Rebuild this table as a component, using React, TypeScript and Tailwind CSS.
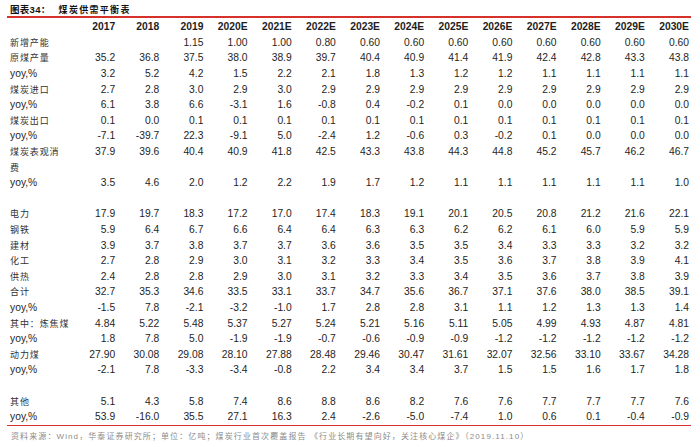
const years = ["2017", "2018", "2019", "2020E", "2021E", "2022E", "2023E", "2024E", "2025E", "2026E", "2027E", "2028E", "2029E", "2030E"];

type Row = { label: string; vals?: string[]; cn?: boolean; tall?: boolean };

const s = (t: string) => t.split(" ");

const rows: Row[] = [
  { label: "新增产能", cn: true, vals: ["", "", ...s("1.15 1.00 1.00 0.80 0.60 0.60 0.60 0.60 0.60 0.60 0.60 0.60")] },
  { label: "原煤产量", cn: true, vals: s("35.2 36.8 37.5 38.0 38.9 39.7 40.4 40.9 41.4 41.9 42.4 42.8 43.3 43.8") },
  { label: "yoy,%", vals: s("3.2 5.2 4.2 1.5 2.2 2.1 1.8 1.3 1.2 1.2 1.1 1.1 1.1 1.1") },
  { label: "煤炭进口", cn: true, vals: s("2.7 2.8 3.0 2.9 3.0 2.9 2.9 2.9 2.9 2.9 2.9 2.9 2.9 2.9") },
  { label: "yoy,%", vals: s("6.1 3.8 6.6 -3.1 1.6 -0.8 0.4 -0.2 0.1 0.0 0.0 0.0 0.0 0.0") },
  { label: "煤炭出口", cn: true, vals: s("0.1 0.0 0.1 0.1 0.1 0.1 0.1 0.1 0.1 0.1 0.1 0.1 0.1 0.1") },
  { label: "yoy,%", vals: s("-7.1 -39.7 22.3 -9.1 5.0 -2.4 1.2 -0.6 0.3 -0.2 0.1 0.0 0.0 0.0") },
  { label: "煤炭表观消\n费", cn: true, tall: true, vals: s("37.9 39.6 40.4 40.9 41.8 42.5 43.3 43.8 44.3 44.8 45.2 45.7 46.2 46.7") },
  { label: "yoy,%", vals: s("3.5 4.6 2.0 1.2 2.2 1.9 1.7 1.2 1.1 1.1 1.1 1.1 1.1 1.0") },
  { label: "" },
  { label: "电力", cn: true, vals: s("17.9 19.7 18.3 17.2 17.0 17.4 18.3 19.1 20.1 20.5 20.8 21.2 21.6 22.1") },
  { label: "钢铁", cn: true, vals: s("5.9 6.4 6.7 6.6 6.4 6.4 6.3 6.3 6.2 6.2 6.1 6.0 5.9 5.9") },
  { label: "建材", cn: true, vals: s("3.9 3.7 3.8 3.7 3.7 3.6 3.6 3.5 3.5 3.4 3.3 3.3 3.2 3.2") },
  { label: "化工", cn: true, vals: s("2.7 2.8 2.9 3.0 3.1 3.2 3.3 3.4 3.5 3.6 3.7 3.8 3.9 4.1") },
  { label: "供热", cn: true, vals: s("2.4 2.8 2.8 2.9 3.0 3.1 3.2 3.3 3.4 3.5 3.6 3.7 3.8 3.9") },
  { label: "合计", cn: true, vals: s("32.7 35.3 34.6 33.5 33.1 33.7 34.7 35.6 36.7 37.1 37.6 38.0 38.5 39.1") },
  { label: "yoy,%", vals: s("-1.5 7.8 -2.1 -3.2 -1.0 1.7 2.8 2.8 3.1 1.1 1.2 1.3 1.3 1.4") },
  { label: "其中：炼焦煤", cn: true, vals: s("4.84 5.22 5.48 5.37 5.27 5.24 5.21 5.16 5.11 5.05 4.99 4.93 4.87 4.81") },
  { label: "yoy,%", vals: s("1.8 7.8 5.0 -1.9 -1.9 -0.7 -0.6 -0.9 -0.9 -1.2 -1.2 -1.2 -1.2 -1.2") },
  { label: "动力煤", cn: true, vals: s("27.90 30.08 29.08 28.10 27.88 28.48 29.46 30.47 31.61 32.07 32.56 33.10 33.67 34.28") },
  { label: "yoy,%", vals: s("-2.1 7.8 -3.3 -3.4 -0.8 2.2 3.4 3.4 3.7 1.5 1.5 1.6 1.7 1.8") },
  { label: "" },
  { label: "其他", cn: true, vals: s("5.1 4.3 5.8 7.4 8.6 8.8 8.6 8.2 7.6 7.6 7.7 7.7 7.7 7.6") },
  { label: "yoy,%", vals: s("53.9 -16.0 35.5 27.1 16.3 2.4 -2.6 -5.0 -7.4 1.0 0.6 0.1 -0.4 -0.9") },
];

const grid = "grid grid-cols-[64px_repeat(14,44.15px)]";

export default function App() {
  return (
    <div className="w-[700px] h-[447px] bg-white pl-[7px] text-[#1e1e1e] font-['Liberation_Sans','Noto_Sans_CJK_SC',sans-serif] overflow-hidden">
      {/* 标题 */}
      <div className="h-[16px] pt-[3px] pl-[3px] flex items-center text-[9.5px] font-bold leading-none text-[#111]">
        <span className="tracking-[0.3px]">图表34：</span>
        <span className="ml-[8px] text-[9px] tracking-[1.3px] font-['Noto_Sans_CJK_SC',sans-serif]">煤炭供需平衡表</span>
      </div>
      <div className="w-[684px] h-[1.5px] bg-[#d6312b]" />

      <div className="w-[684px] border-b-[1.5px] border-[#d6312b] pt-[2px]">
        <div className={`${grid} h-[15.4px] items-center text-[10.3px] font-bold leading-none`}>
          <div />
          {years.map((y) => (
            <div key={y} className="text-right">{y}</div>
          ))}
        </div>

        {rows.map((r, i) => (
          <div key={i} className={`${grid} ${r.tall ? "h-[31.2px]" : "h-[15.6px]"} text-[10.3px] leading-[15.6px]`}>
            {r.cn ? (
              <div className="pl-[3px] whitespace-pre-line text-[9px] tracking-[0.9px] text-[#333] font-['Noto_Sans_CJK_SC',sans-serif]">
                {r.label}
              </div>
            ) : (
              <div className="pl-[3px]">{r.label}</div>
            )}
            {(r.vals ?? []).map((v, j) => (
              <div key={j} className="text-right">{v}</div>
            ))}
          </div>
        ))}
      </div>

      {/* 资料来源 */}
      <div className="pt-[5px] pl-[4px] text-[8px] leading-[12px] tracking-[1.1px] text-[#8c8c8c] whitespace-nowrap">
        资料来源：Wind，华泰证券研究所；单位：亿吨；煤炭行业首次覆盖报告 《行业长期有望向好，关注核心煤企》（2019.11.10）
      </div>
    </div>
  );
}
